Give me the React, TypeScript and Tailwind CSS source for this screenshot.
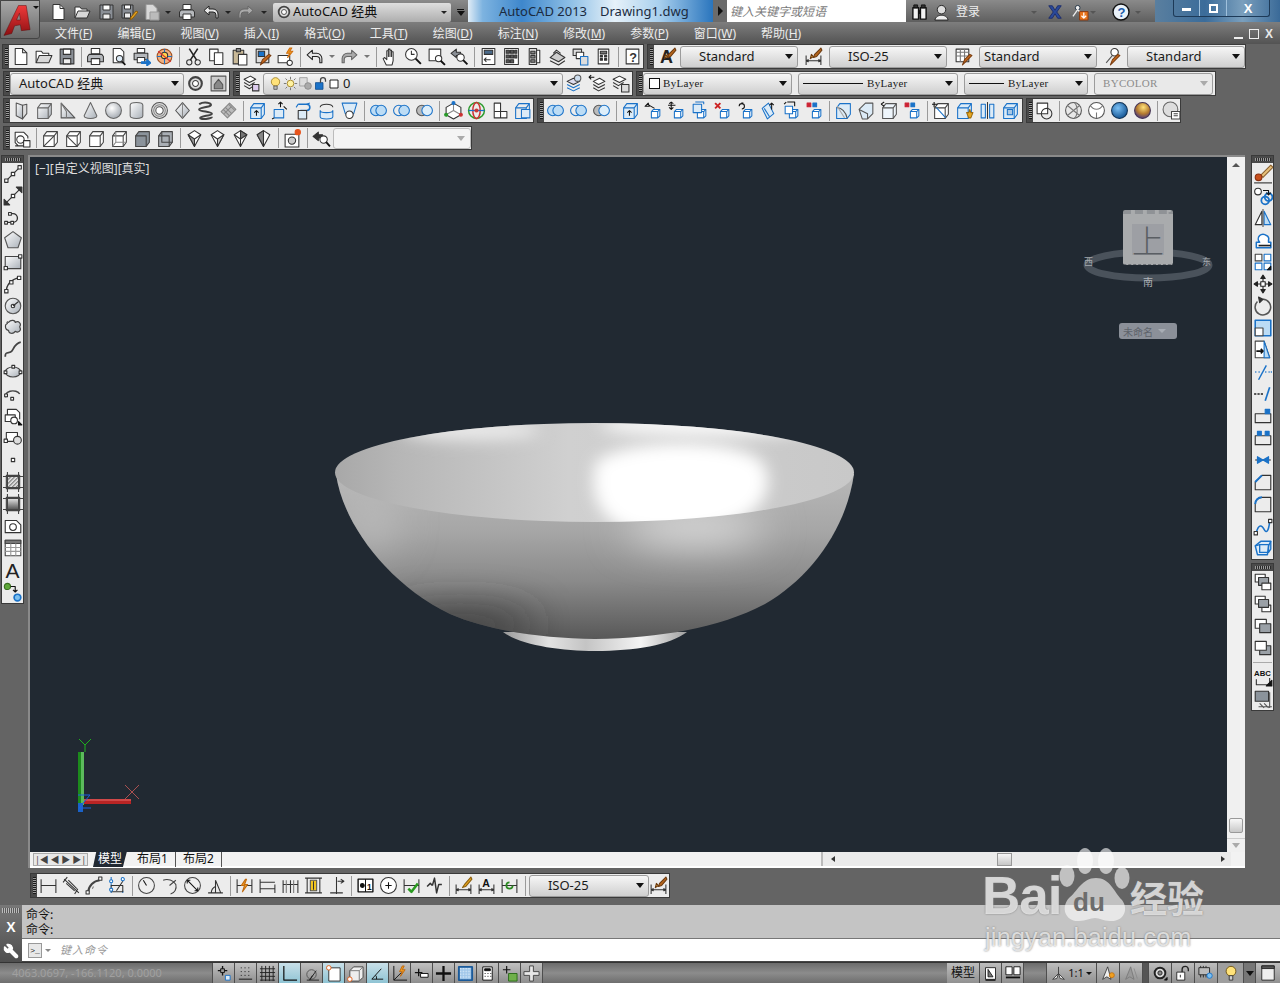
import React from "react";
import { Wrench } from "lucide-react";

type T = [string, string?, string?, number?];
const c = (x: number, y: number, r: number) => `M${x - r} ${y}a${r} ${r} 0 1 0 ${2 * r} 0a${r} ${r} 0 1 0 ${-2 * r} 0z`;
const r = (x: number, y: number, w: number, h: number) => `M${x} ${y}h${w}v${h}h${-w}z`;
const D = "#333";
const B = "#1a72c8";
const W = "#fff";
const M = "url(#metal)";
const N = "none";

const mb: T[] = [["M7 10l2-2h6v6l-2 2H7z", W, B], ["M7 10h6v6M13 10l2-2", N, B]];
const bb: T[] = [["M2.5 6.5l3-4h10v10l-3 4h-10z", "#dcebf7", B], ["M2.5 6.5h10v10M12.5 6.5l3-4", N, B]];
const gb: T[] = [["M2.5 6.5l3-4h10v10l-3 4h-10z", W, "#444"], ["M2.5 6.5h10v10M12.5 6.5l3-4", N, "#444"]];
const rings = (a: string, b: string): T[] => [[c(6.5, 9, 5), a, B], [c(11.5, 9, 5), b, B]];
const dim: T[] = [["M2 3v13M16 3v13M2 9h14", N, D]];
const dimB: T[] = [["M2 8v9M16 8v9M2 13h14M2 13l2-1v2zM16 13l-2-1v2z", N, D]];
const brush: T[] = [["M16 1l-6 6-1 3 3-1 5-6z", "#b5651d", "#6b3a10"], ["M9 9l-3 2 1-4z", "#d9a441", "#6b3a10"]];

const I: Record<string, T[]> = {
  new: [["M4 1.5h7l4 4v11H4z", W], ["M11 1.5v4h4"]],
  open: [["M2 15V4h5l1.5 2H14v2", W], ["M2 15l3-7h12l-3 7z", "#d8d8d8"]],
  save: [[r(3, 2, 13, 14), "#8a8f96"], [r(6, 2, 7, 5), W], [r(6, 11, 7, 5), "#eee"]],
  saveas: [[r(2, 2, 11, 13), "#8a8f96"], [r(4.5, 2, 6, 4), W], [r(4.5, 10, 6, 5), "#eee"], ["M16 8l-5 6-1 3 3-2 5-6z", "#e3a11c", "#8a5b10"]],
  plotd: [["M4 1.5h7l4 4v11H4z", "#d8d8d8", "#999"], ["M8 9h9v8H8z", "#bbb", "#999"]],
  print: [[r(5, 1.5, 8, 5), W], ["M3 7h12l1.5 2v5H1.5V9z", "#b5b8bc"], [r(5, 11, 8, 5.5), W]],
  preview: [["M4 1.5h7l3 3V15H4z", W], [c(10, 11, 3), "#dbe9f5"], ["M12 13.5l3.5 3.5", N, "#111", 1.6]],
  publish: [[r(5, 1.5, 7, 4), W], ["M2 6h13v6H2z", "#b5b8bc"], [r(5, 10, 7, 5), W], ["M9 14h5v-2.5l4 3.5-4 3v-2.5H9z", B, B]],
  p3d: [[c(9, 9, 7), "#f0b080", "#a05020"], ["M9 2v14M2 9h14", N, B], [c(9, 8, 3), "#ffd24d", D], ["M3 4l12 10", N, "#d33"]],
  cut: [[c(5, 14.5, 2.5)], [c(13, 14.5, 2.5)], ["M6 12.5L13 1.5M12 12.5L5 1.5", N, "#222", 1.5]],
  copy: [[r(2.5, 2, 8, 11), W], [r(7, 5.5, 8, 11), W]],
  paste: [[r(3, 3, 10, 13), "#c9b997"], [r(6, 1.5, 4, 3), "#888"], [r(8, 7, 8, 10), W]],
  match: [[r(3, 2, 12, 13), "#ddd"], [r(5, 4, 6, 5), B], ["M17 8l-6 6-4 3 2-5 6-5z", "#c8691c", "#7a3d10"]],
  block: [[r(2, 8, 11, 7), W], ["M13 1l-3 5h3l-2 4 5-6h-3l2-3z", "#f0981f", "#d07010"], [c(13, 15, 2.5), W]],
  undo: [["M7 3L2 7.5 7 12V9h4a3 3 0 0 1 3 3v3h2v-4a5 5 0 0 0-5-5H7z", W]],
  redo: [["M11 3l5 4.5L11 12V9H7a3 3 0 0 0-3 3v3H2v-4a5 5 0 0 1 5-5h4z", "#f4f4f4", "#a8a8a8"]],
  undow: [["M7 3L2 7.5 7 12V9h4a3 3 0 0 1 3 3v3h2v-4a5 5 0 0 0-5-5H7z", "#e8e8e8", "#222"]],
  redow: [["M11 3l5 4.5L11 12V9H7a3 3 0 0 0-3 3v3H2v-4a5 5 0 0 1 5-5h4z", "#aaa", "#666"]],
  pan: [["M5 17l-3-6 1.5-1 2 2V3.5h1.5V9V2h1.5v7V3h1.5v6V4.5h1.5V13l-1 4z", W]],
  zrt: [[c(7, 7, 5.5), W], ["M7 3.5V7h3"], ["M11 11l5 5", N, "#111", 1.8]],
  zw: [[r(2, 2, 11, 11), W], [c(11, 11, 3), W], ["M13 13l4 4", N, "#111", 1.8]],
  zp: [["M1 6l5-4v3h4v3H6v2z", "#8a8f96"], [c(10, 10, 3.5), W], ["M12.5 12.5l4 4", N, "#111", 1.8]],
  props: [[r(3, 1.5, 12, 15), W], [r(5, 3, 8, 4), "#4a6a8a"], ["M11 12H5M7 10l-2 2 2 2"]],
  dc: [[r(2.5, 1.5, 13, 15), W], [r(4, 3, 3, 3), "#555"], [r(8, 3, 3, 3), "#555"], [r(12, 3, 2, 3), "#555"], [r(4, 7.5, 3, 3), "#555"], [r(8, 7.5, 3, 3), "#555"], [r(12, 7.5, 2, 3), "#555"], [r(4, 12, 3, 3), "#555"], [r(8, 12, 3, 3), "#555"]],
  tp: [[r(4, 1.5, 7, 15), "#ddd"], [r(11, 3, 3, 12), W], [r(5.5, 4, 4, 2.5), "#888"], [r(5.5, 8, 4, 2.5), "#888"], [r(5.5, 12, 4, 2.5), "#888"]],
  sheet: [["M2 10l6-5 8 5-6 4z", "#ccc"], ["M2 13l8 4 6-4"], ["M5 6l3-3 4 3", N, "#333"]],
  markup: [[r(2, 2, 8, 6), "#ddd"], [r(5, 5, 7, 6), W], [r(9, 9, 7, 8), "#ddd", B]],
  calc: [[r(4, 2, 10, 14), W], [r(6, 4, 6, 2.5), "#777"], [r(6, 8, 2, 1.5), D], [r(10, 8, 2, 1.5), D], [r(6, 11, 2, 1.5), D], [r(10, 11, 2, 1.5), D]],
  help: [[r(3, 2, 12, 14), W], ["@6,14,12,?", D, N]],
  styleA: [["@2,15,17,A", "#222", N], ...brush],
  dimst: [...dimB, ...brush],
  tablest: [[r(2, 2, 12, 12), W], ["M2 5h12M2 8.5h12M6 2v12M10 2v12", N, "#777"], ["M17 8l-6 6-3 3 2-5 5-5z", "#c8691c", "#7a3d10"]],
  mlst: [[c(11, 5, 3.5), W], ["M9 8L3 15", N, "#555"], ["M16 8l-6 6-3 3 2-5 5-5z", "#c8691c", "#7a3d10"]],
  gear: [[c(9, 9, 6), "#ddd", "#444", 2], [c(9, 9, 2.8), W, "#444"]],
  wsp: [[r(2, 2, 14, 14), "#ccc", "#555"], ["M5 10l4-5 4 5v4H5z", "#888", "#555"]],
  layer: [["M2 5l6-3 5 3-6 3z", W], ["M2 8l5 3 5-3M2 11l5 3 3-2"], [r(10, 10, 6, 6), "#dce"]],
  bulb: [[c(9, 7, 5), "#ffe27a", "#a08020"], [r(7, 12, 4, 4), "#bbb", "#555"]],
  sun: [[c(9, 9, 4), "#fff2a0", "#a08020"], ["M9 1v3M9 14v3M1 9h3M14 9h3M3 3l2 2M13 13l2 2M15 3l-2 2M5 13l-2 2", N, "#666"]],
  freeze: [[r(2, 2, 9, 10), "#ddd", "#999"], [c(12, 12, 4), "#aaa", "#888"]],
  lock: [[r(3, 8, 9, 8), B, "#124f90"], ["M9 8V5a3 3 0 0 1 6 0v2", N, "#444", 1.5]],
  sq: [[r(3, 3, 12, 12), W, "#111", 1.4]],
  lmatch: [["M2 7l6-3 6 3-6 3z", "#dde"], ["M2 10l6 3 6-3M2 13l6 3 6-3", N, B], [c(12, 4, 3), "#cde", "#555"]],
  lprev: [["M5 7l6-3 5 3-6 3z", W], ["M5 10l5 3 6-3M5 13l5 3 6-3"], ["M1 3h5M3 1l-2 2 2 2", N, "#111"]],
  lstate: [["M2 5l6-3 6 3-6 3z", W], ["M2 8l5 3 5-3M2 11l5 3"], [r(10, 10, 7, 7), "#ddd"]],
  polysolid: [["M4 2l6 2v13l-6-3z", M, "#555"], ["M10 4l4-1v9l-4 5z", "#ddd", "#555"]],
  box: [["M2.5 6.5l3-4h10v10l-3 4h-10z", M, "#666"], ["M2.5 6.5h10v10M12.5 6.5l3-4", N, "#666"]],
  wedge: [["M3 2v14h13z", M, "#555"], ["M3 2l5 8v6", N, "#777"]],
  cone: [["M9 1.5L3 14a6 2.5 0 0 0 12 0z", M, "#666"]],
  sphere: [[c(9, 9, 7.5), "url(#ball)", "#666"]],
  cyl: [["M3 4a6 2.5 0 0 1 12 0v10a6 2.5 0 0 1-12 0z", M, "#666"]],
  torus: [[c(9, 9, 7.5), "#ddd", "#555"], [c(9, 9, 3.5), W, "#555"], [c(9, 9, 5.5), N, "#888"]],
  pyramid: [["M9 1.5L2.5 9 9 16.5l6.5-7.5z", M, "#555"], ["M9 1.5V16.5", N, "#888"]],
  helix: [["M3 3c5-3 12-1 11 1s-11 2-11 4 12 2 12 4-11 2-11 4 11 1 11-1", N, "#444", 2]],
  planar: [["M2 10l8-8 6 6-8 8z", "#bbb", "#888"], ["M6 6l6 6M9 3l6 6M4 8l6 6M12 5l-7 7", N, "#888"]],
  extrude: [...bb, ["M8 14V9M6 11l2-2 2 2", N, "#111"]],
  presspull: [[r(3, 8, 9, 8), "#dcebf7", B], ["M9 6V1M7 3l2-2 2 2M12 5l3 3M3 16l-2 1", N, "#111"]],
  sweep: [["M4 3h8a3 3 0 0 1 0 6H6", N, B, 1.5], [r(4, 9, 8, 8), "#dcebf7", D], ["M4 3l-2 3M12 3l3-1", N, B]],
  revolve: [["M3 6a6 3 0 0 1 12 0", N, D], ["M3 9a6 2 0 0 0 12 0v6a6 2 0 0 1-12 0z", "#dcebf7", B]],
  loft: [["M2 2h14l-3 10H5z", "#dcebf7", B], [c(9, 13, 3.5), W, D]],
  u1: rings("#bcdcf5", "#bcdcf5"),
  u2: rings("none", "#bcdcf5"),
  u3: [[c(6.5, 9, 5), "#bbb", "#555"], [c(11.5, 9, 5), "#ddeefa", B]],
  g3d: [["M9 2l7 4v7l-7 4-7-4V6z", W, D], ["M9 9V2M9 9l-7 4M9 9l7 4", N, "#888"], [c(9, 2, 1.4), B, B], [c(2, 13, 1.4), "#2a9a2a", "#2a9a2a"], [c(16, 13, 1.4), "#c33", "#c33"]],
  g3r: [[c(9, 9, 7.5), N, "#2a9a2a", 1.4], ["M9 1.5a3.5 7.5 0 0 1 0 15a3.5 7.5 0 0 1 0-15", N, "#c33", 1.4], ["M1.5 9h15", N, B, 1.2], [c(9, 9, 1.5), "#c33", "#c33"]],
  gscale: [["M4 2h6v8h6v6H4z", W, D], ["M4 10h6v6", N, D]],
  gmove: [...bb.map((t) => [t[0], N, B] as T), [r(8, 8, 8, 8), "#dcebf7", B]],
  c1: [...mb, ["M3 3l7 4M1 5l3-3 1 3z", N, "#111"]],
  c2: [...mb, ["M4 1v7M1 4h7M2 2.5L4 1l2 1.5M2 6l2 2 2-2", N, "#111"]],
  c3: [...mb, [r(3, 3, 8, 8), "#dcebf7", B], ["M5 1h8v2", N, B]],
  c4: [...mb, ["M2 2l5 5M7 2L2 7", N, "#c22", 1.8]],
  c5: [...mb, ["M3 5a2.5 2.5 0 1 1 2.5 2.5M5 2l2 0", N, "#111"]],
  c6: [["M3 7l6-5 5 10-6 5z", "#dcebf7", B], ["M12 2v6M10 4l2-2 2 2", N, "#111"], ["M5 7l5 8", N, B]],
  c7: [...mb, [r(3, 5, 7, 7), W, B], ["M5 1h7v4M2 3l2-2", N, "#111"]],
  c8: [...mb, [r(2, 2, 3.5, 3.5), "#c23", "#c23"], [r(7.5, 2, 3.5, 3.5), B, B]],
  d1: [["M2.5 6.5l3-4h10v10l-3 4h-10z", "#dcebf7", B], ["M2.5 6.5c4-1 9 4 10 10", N, "#555"], ["M3 5l7 11", N, "#aaa"]],
  d2: [["M2 8L8 2h7v10l-5 5H5z", "#dcebf7", "#555"], ["M2 8l8 4v5", N, "#555"]],
  d3: [...bb.map((t) => [t[0], t[1] === "#dcebf7" ? "#eef5fb" : N, "#555"] as T), ["M1 3l3-2M1 3l3 2", N, "#111"]],
  e1: [...gb, ["M2 1v5M0 3h5", N, "#111"], ["M4 6l9 10", N, B]],
  e2: [...bb, ["M13 16l-2-5 2 0 1-3 1 3 2 0-2 5z", "#e9a820", "#9a6a10"]],
  e3: [[r(3, 3, 4, 13), "#dcebf7", B], [r(11, 3, 4, 13), "#dcebf7", B], ["M9 1v16", N, "#333", 1]],
  e4: [...bb, [r(6, 8, 5, 5), "#aac8e4", B]],
  e5: [...bb.map((t) => [t[0], t[1] === "#dcebf7" ? W : N, B] as T), ["M5 14l3 3 6-8", N, "#2a9a20", 2.2]],
  f1: [[r(2, 2, 10, 10), W, D], [c(11, 12, 5), "none", D]],
  w1: [[c(9, 9, 7.5), "#e8e8e8", "#555"], ["M3 4l12 10M15 4L3 14M9 1.5a3.5 7.5 0 0 1 0 15", N, "#777"]],
  w2: [[c(9, 9, 7.5), W, "#555"], ["M3 4c3 5 9 5 12 0M9 11v5", N, "#777"]],
  w3: [[c(9, 9, 7.5), "url(#blue)", "#135"]],
  w4: [[c(9, 9, 7.5), "url(#gold)", "#435"]],
  w5: [[c(8, 8, 7), "#ddd", "#666"], [r(9, 10, 8, 7), W, "#444"], ["M11 12h4M11 14h4", N, "#444"]],
  q1: [["M3 16h10M6 16l-3-3V3h8l4 4v2", W], [c(8, 10, 3.5), W], [r(11, 11, 6, 6), W]],
  v1: [...gb, ["M12.5 6.5L2.5 16.5", N, "#444"]],
  v2: [...gb, ["M2.5 6.5l10 10", N, "#444"]],
  v3: gb,
  v4: [...gb, ["M5.5 2.5v10h10M5.5 12.5l-3 4", N, "#888"]],
  v5: [["M5.5 2.5h10v10l-3 4h-10v-10z", "#8b939b", "#444"], ["M2.5 6.5h10v10", N, "#444"]],
  v6: [["M5.5 2.5h10v10l-3 4h-10v-10z", "#a9aeb4", "#444"], ["M2.5 6.5h10v10M5.5 2.5v10h10", N, "#444"]],
  vs1: [["M9 1.5l6 4-6 11-6-11z", W, "#333"], ["M3 5.5l6 4v7z", "#999", "#333"], ["M15 5.5l-6 4", N, "#333"]],
  vs2: [["M9 1.5l6 4-6 11-6-11z", W, "#333"], ["M15 5.5l-6 4v7z", "#ccc", "#333"], ["M3 5.5l6 4", N, "#333"]],
  vs3: [["M9 1.5l6 4-6 11-6-11z", W, "#333"], ["M9 1.5l6 4-6 4z", "#777", "#333"], ["M3 5.5l6 4v7", N, "#333"]],
  vs4: [["M9 1.5l6 4-6 11-6-11z", W, "#333"], ["M3 5.5l6-4v15z", "#888", "#333"]],
  cam: [[r(2, 5, 13, 12), W], [c(8.5, 11, 3.5), "#ccc"], [c(14, 3, 2.5), "#e8541c", "#e8541c"]],
  zoomarrow: [["M1 7l5-4v2.5h4v3H6V11z", "#333"], [c(11, 10, 3.5), W], ["M13.5 12.5l3.5 4", N, "#111", 1.8]],
  l1: [["M3 15L15 3", N, "#333"], [r(1.5, 13.5, 3, 3), W], [r(13.5, 1.5, 3, 3), W], [r(7.5, 7.5, 3, 3), W]],
  l2: [["M3 15L15 3", N, "#333"], ["M1 17v-5l5 5zM17 1v5l-5-5z", "#333", "#333"], [r(7.5, 7.5, 3, 3), W]],
  l3: [["M3 13h6a4 4 0 1 0 0-8h-2", N, "#333", 1.2], [r(1.5, 12, 2.5, 2.5), W], [r(7, 12, 2.5, 2.5), W], [r(5, 4, 2.5, 2.5), W]],
  l4: [["M9 1.5L16.5 7l-3 9h-9l-3-9z", M, "#555"]],
  l5: [[r(2, 4, 14, 11), M, "#444"], [r(1, 13, 3, 3), W], [r(14, 2.5, 3, 3), W]],
  l6: [["M3 16c0-7 4-11 12-13", N, "#333", 1.2], [r(1.5, 14, 3, 3), W], [r(6, 6, 3, 3), W], [r(13, 2, 3, 3), W]],
  l7: [[c(9, 9, 7), M, "#555"], [c(9, 9, 1.6), W], ["M9 9l5-4", N, "#333"]],
  l8: [["M5 4c2-3 6-2 6 0 3-2 6 1 4 4 2 3-1 6-4 4-2 3-6 2-6-1-3 0-4-5-1-6-1-1 0-2 1-1z", M, "#444"]],
  l9: [["M2 15c0-6 4-2 6-5s3-7 8-8", N, "#444", 1.6]],
  l10: [["M2 9a7 4.5 0 1 0 14 0a7 4.5 0 1 0-14 0", M, "#444"], [r(1, 8, 2.5, 2.5), W], [r(14.5, 8, 2.5, 2.5), W], [r(8, 3, 2.5, 2.5), W]],
  l11: [["M3 12a6.5 4 0 1 1 12-3", N, "#444", 1.3], [r(1.5, 9, 2.5, 2.5), W], [r(7, 12, 2.5, 2.5), W]],
  l12: [["M4 8V3h8l3 3v6", W], [r(2, 8, 9, 6), W], [c(10, 13, 3), W], ["M14 14l3 3h-3z", "#111", "#111"]],
  l13: [[r(3, 4, 10, 8), W], [r(1, 10, 3, 3), W], [c(13, 11, 3.5), "#ddd"]],
  l14: [[r(7.5, 7.5, 3, 3), "#fff", "#333"]],
  l15: [[r(3, 3, 12, 12), "url(#hatch)", "#444"], ["M0 4h18M0 14h18M4 0v18M14 0v18", N, "#444"]],
  l16: [[r(3, 3, 12, 12), "url(#grad)", "#444"], ["M0 4h18M0 14h18M4 0v18M14 0v18", N, "#444"]],
  l17: [["M2 4h10l4 4v7H2z", W, "#333"], [c(9, 10, 3), W, "#333"]],
  l18: [[r(2, 2, 14, 14), W, "#444"], [r(2, 2, 14, 3), "#777", "#444"], ["M2 8.5h14M2 12h14M7 5v11M11.5 5v11", N, "#999"]],
  l20: [[c(4, 4, 2.8), "#5fa83a", "#3a7020"], ["M7 4h4v4M9 7l2 2 2-2", N, "#111"], [c(13, 14, 3), "#7cc0f0", B, 1.5]],
  r1: [["M16 1l-9 9 2 2 9-9z", "#e8c07a", "#8a6030"], [c(5, 12, 3), "#c8501c", "#8a3010"], ["M1 17h16", N, "#333"]],
  r2: [[c(4.5, 5, 3), W, D], [c(11, 13, 3.5), "none", B, 1.6], [c(14, 10, 3.5), "none", B, 1.6], ["M9 4h5v3M12 6l2 2 2-2", N, "#111"]],
  r3: [["M8 3v12H2z", W, D], ["M10 3v12h6z", "#bcdcf5", B], ["M9 1v16", N, "#555"]],
  r4: [["M3 16v-5h3a4 4 0 0 1 6-6 3 3 0 0 1 2 4v2h2v5z", W, B, 1.4], ["M5 14h11", N, "#222", 1.5]],
  r5: [[r(2, 2, 6, 6), W, "#444"], [r(10, 2, 6, 6), W, B], [r(2, 10, 6, 6), W, B], [r(10, 10, 6, 6), W, B], ["M13 16l3-3v3z", "#111", "#111"]],
  r6: [["M9 1l2 3H7zM9 17l2-3H7zM1 9l3-2v4zM17 9l-3-2v4z", "#222", "#222"], ["M4 9h10M9 4v10", N, "#222"], [r(7, 7, 4, 4), W, "#222"]],
  r7: [["M9 3a7 7 0 1 1-5 2", N, "#555", 1.4], ["M5 1l4 2-3 3z", "#333", "#333"]],
  r8: [[r(2, 2, 14, 14), "#bcdcf5", B, 1.4], [r(2, 9, 7, 7), W, "#444"]],
  r9: [["M2 1h8l5 15H2z", W, "#444"], ["M10 1l5 15H10z", "#bcdcf5", B], ["M3 10h6M7 8l2 2-2 2", N, "#111", 1.4]],
  r10: [["M2 9h1M5 9h1M11 9h1M14 9h1M16 9h1", N, B, 1.4], ["M12 3L5 16", N, B, 1.3]],
  r11: [["M1 9h2M4 9h2M7 9h2", N, "#222", 1.3], ["M11 15l4-12", N, B, 1.5]],
  r12: [["M2 7h14v8H2z", "#ececec", "#333"], [r(11, 3, 4, 4), B, B]],
  r13: [["M2 7h14v8H2z", "#ececec", "#333"], [r(4, 3, 3.5, 3.5), B, B], [r(11, 3, 3.5, 3.5), B, B]],
  r14: [["M2 9h14", N, "#333"], ["M4 6l5 3-5 3zM14 6L9 9l5 3z", B, B]],
  r15: [["M2 9l6-6h8v13H2z", "#ececec", "#333"], ["M2 9l6-6", N, B, 1.8]],
  r16: [["M2 16V9a6 6 0 0 1 6-6h8v13z", "#ececec", "#333"], ["M2 9a6 6 0 0 1 6-6", N, B, 1.8]],
  r17: [["M3 15c2-8 5-7 7-3s4 2 5-7", N, B, 1.4], [r(1, 14, 3, 3), W], [r(14, 3, 3, 3), W]],
  r18: [["M2 7l5-4h9l-2 4-1 8H4z", "#dcebf7", B, 1.3], ["M6 6h8v7H6zM2 7l4-1M14 13l2-3V3", N, B, 1.2]],
  o1: [[r(2, 2, 9, 7), W, "#333"], [r(5, 5, 9, 7), "#9aa0a6", "#333"], [r(8, 10, 8, 6), W, "#333"]],
  o2: [[r(2, 2, 9, 7), W, "#333"], [r(8, 10, 8, 6), W, "#333"], [r(5, 5, 9, 7), "#9aa0a6", "#333"]],
  o3: [[r(2, 3, 10, 8), W, "#333"], [r(6, 7, 10, 8), "#9aa0a6", "#333"]],
  o4: [[r(6, 7, 10, 8), "#9aa0a6", "#333"], [r(2, 3, 10, 8), W, "#333"]],
  abc: [["@1,8,7,ABC", "#111", N], ["M3 11v5h12v-6", N, "#333"], ["M12 17l5-5v5z", "#111", "#111"]],
  o6: [[r(2, 2, 12, 9), "#8b939b", "#333"], ["M5 16h12M15 3v14M6 13l4 4M10 13l4 4", N, "#555"]],
  h1: dim,
  h2: [["M2 3l14 13M5 1L1 6M15 12l-3 5M4 7l8 7", N, D], ["M6 4l8 8", N, D]],
  h3: [["M3 15a12 12 0 0 1 11-11", N, "#444", 2], [r(1, 14, 3, 3), W], [r(13, 1, 3, 3), W], ["M8 10l-1 2", N, "#777"]],
  h4: [["M3 1v3M3 7v3M3 13v3M14 2v3M14 14v2", N, B], ["M3 9h11v6H3zM14 5L8 14", N, D], [c(3, 5, 1.5), W, B], [c(14, 3, 1.5), W, B], [c(3, 13, 1.5), W, B]],
  h5: [[c(9, 9, 7.5), "#eee", "#444"], ["M9 9L6 4", N, "#111"]],
  h6: [["M3 4a10 10 0 0 1 12 4M15 8c1 4-1 8-5 9M9 9l6-5", N, "#444"]],
  h7: [[c(9, 9, 7.5), "#eee", "#444"], ["M4 4l10 10M4 4v3M4 4h3M14 14v-3M14 14h-3", N, "#111"]],
  h8: [["M2 16h14M9 16L9 4M9 4l5 12M5 16c0-4 2-5 4-6", N, "#333"]],
  h9: [...dim, ["M10 3L6 9h3l-2 6 5-7H9l2-5z", "#f09a1f", "#c06a10"]],
  h10: [["M2 3v13M16 8v8M2 6h14M2 12h14", N, D]],
  h11: [["M2 4v12M9 4v12M16 4v12M2 8h7M9 8h7", N, D], ["M5 4v12M12 4v12", N, "#777"]],
  h12: [["M1 2h16M1 16h16M3 2v14M15 2v14", N, D], [r(6, 4, 6, 10), "#f0c420", "#555"], ["M9 5v8", N, "#333"]],
  h13: [["M9 1v16M3 16h12M10 5h6M13 3l3 2-3 2", N, D]],
  h14: [[r(2, 3, 14, 12), W, "#111", 1.3], ["M9 3v12", N, "#111"], [c(6, 9, 1.8), "#111", "#111"], ["@10.5,13,8,1", "#111", N]],
  h15: [[c(9, 9, 7.5), W, "#333"], ["M6 9h6M9 6v6", N, "#111"]],
  h16: [...dim, ["M6 12l3 3 6-8", N, "#2a9a20", 2.4]],
  h17: [["M2 10l3-3 2 2M7 9l2-7 2 14 2-8h3", N, D, 1.4]],
  h18: [...dimB, ["M16 1l-6 7-2 3 3-1 6-7z", "#e8a41c", "#8a6010"]],
  h19: [...dimB, ["@5,10,10,A", "#111", N]],
  h20: [...dim, ["M9 6a3 3 0 1 0 3 3", N, "#2a8a20", 1.6]],
  s1: [["M8 1v10M3 6h10", N, "#111", 1.4], [r(6, 4, 4, 4), "#999", "#111"], [r(11, 11, 5, 5), "#dcebf7", B]],
  s2: [["M4 3h1M8 3h1M12 3h1M4 7h1M8 7h1M12 7h1M4 11h1M8 11h1M12 11h1M2 15h14", N, "#111"]],
  s3: [["M1 4h16M1 8h16M1 12h16M1 16h16M3 1v16M7 1v16M11 1v16M15 1v16", N, "#222"]],
  s4: [["M3 1v15h14", N, "#111", 1.3]],
  s5: [[c(9, 10, 5), "none", "#555"], ["M4 16h13M7 16l7-10M10 11l-3 5", N, "#222"]],
  s6: [[r(4, 3, 12, 14), W, "#333"], [c(4, 3, 2.4), W, "#e0601c"]],
  s7: [["M3 6l4-4h10v11l-4 4H3z", "#eee", "#444"], ["M3 6h10v11M13 6l4-4", N, "#777"], [c(3, 15, 2.4), W, "#e0601c"]],
  s8: [["M3 15L13 4M3 15h12", N, "#111"], ["M7 11c1 1 1 2 1 4", N, "#111"]],
  s9: [["M3 1v15h14M3 16l8-8", N, "#111"], ["M12 1L9 7h3l-2 5 5-7h-3l2-4z", "#f09a1f", "#c06a10"]],
  s10: [["M2 8h8M6 4v8", N, "#111", 1.4], [r(8, 9, 8, 4), W, "#111"]],
  s11: [["M1 9h16M9 1v16", N, "#111", 2.4]],
  s12: [[r(2, 2, 14, 14), "url(#dots)", "#1a5a9a", 2]],
  s13: [[r(4, 2, 10, 14), W, "#111"], [r(6, 4, 6, 2), "#111", "#111"], ["M6 9h1M9 9h1M12 9h1M6 12h1M9 12h1M12 12h1", N, "#111"]],
  s14: [["M6 1v8M2 5h8", N, "#111", 1.2], [r(8, 9, 9, 8), "#6fb04a", "#2a6a1a"]],
  s15: [["M7 1h4v6h6v4h-6v6H7v-6H1V7h6z", "#e8e8e8", "#444"]],
  t1: [[r(3, 2, 12, 14), W, "#111"], ["M3 17h12", N, "#111", 1.5], ["M6 4v9h6z", "#777", "#111"]],
  t2: [[r(1, 2, 7, 9), W, "#111"], [r(10, 2, 7, 9), W, "#111"], ["M1 14h16", N, "#111", 2]],
  t3: [["M9 1v8M9 9l-7 7 5-1zM9 9l7 7-5-1z", "#eee", "#333"]],
  t4: [["M8 1L2 16l5-3 5 3z", "#eee", "#333"], [c(13, 11, 3), "#f0a020", "#c07010"]],
  t5: [["M8 1L2 16l5-3 5 3z", "#999", "#777"], ["M12 3l4 12", N, "#888"]],
  t6: [[c(9, 9, 6), "#ddd", "#222", 2.2], [c(9, 9, 2.4), "#888", "#222"], ["M14 17l3-3v3z", "#111", "#111"]],
  t7: [[r(2, 8, 9, 9), W, "#222"], ["M6 11v3", N, "#222"], ["M8 8V5a3 3 0 0 1 7 0v2", N, "#222", 1.5]],
  t8: [[r(1, 3, 12, 8), "#bbb", "#222"], ["M3 11v3M6 11v3M9 11v3M3 1v2M6 1v2M9 1v2", N, "#222"], [c(13, 12, 3), "#7cc0f0", B]],
  t9: [[c(9, 7, 5.5), "#ffe27a", "#6a5010"], [r(7, 12, 4, 5), "#ccc", "#333"]],
  t10: [[r(2, 1, 14, 16), "#eee", "#222"], [r(2, 1, 14, 3), "#555", "#222"]],
  bino: [[r(2, 4, 6, 12), "#f2f2f2", "#111", 1.5], [r(10, 4, 6, 12), "#f2f2f2", "#111", 1.5], [r(3, 1, 4, 3), "#333", "#111"], [r(11, 1, 4, 3), "#333", "#111"], [r(8, 7, 2, 3), "#111", "#111"]],
  user: [[c(9, 6, 4.5), "#ddd", "#222"], ["M2 17c1-4 4-5 7-5s6 1 7 5z", "#eee", "#222"]],
  xc: [["M2 2h4l3 5 3-5h4l-5 7 5 7h-4l-3-5-3 5H2l5-7z", "#2a4a9a", "#1a2a6a"]],
  exch: [[c(6, 4, 2.5), "#eee", "#234"], ["M1 13l5-7 3 3", N, "#eee", 1.4], [r(8, 8, 9, 9), "#e8741c", "#8a3a10"], ["M12.5 9v6M10 12.5l2.5 2.5 2.5-2.5", N, W, 1.3]],
  hlp: [[c(9, 9, 8), "#eaf2fa", "#111", 1.4], ["@5.5,14,13,?", "#1a5aaa", N]],
};

function Ic({ n, s = 19 }: { n: string; s?: number }) {
  const list = I[n] ?? [];
  return (
    <svg width={s} height={s} viewBox="0 0 18 18" className="shrink-0">
      {list.map((t, i) => {
        if (t[0].startsWith("@")) {
          const [x, y, sz, ...rest] = t[0].slice(1).split(",");
          return (
            <text key={i} x={x} y={y} fontSize={sz} fontWeight="bold" fontFamily="Liberation Sans, sans-serif" fill={t[1]}>
              {rest.join(",")}
            </text>
          );
        }
        return <path key={i} d={t[0]} fill={t[1] ?? "none"} stroke={t[2] ?? D} strokeWidth={t[3] ?? 1} strokeLinejoin="round" />;
      })}
    </svg>
  );
}

const Arrow = ({ dark = true }: { dark?: boolean }) => (
  <span className={`w-0 h-0 border-l-[4px] border-r-[4px] border-t-[5px] border-l-transparent border-r-transparent ${dark ? "border-t-[#111]" : "border-t-[#aaa]"}`} />
);
const Tiny = ({ c: col = "border-t-[#555]" }: { c?: string }) => (
  <span className={`w-0 h-0 border-l-[3px] border-r-[3px] border-t-[3px] border-l-transparent border-r-transparent ${col}`} />
);

const Grip = () => (
  <div className="w-[6px] self-stretch flex items-center justify-center bg-[#4a4a4a] shrink-0">
    <div className="w-[3px] h-[17px] bg-[repeating-linear-gradient(0deg,#1a1a1a_0_1px,#9a9a9a_1px_2px)]" />
  </div>
);
const Sep = () => <div className="w-px h-[20px] bg-[#9a9a9a] ml-[3px] mr-[2px] shrink-0" />;

function Icons({ list }: { list: string }) {
  return (
    <>
      {list.split(" ").map((n, i) =>
        n === "|" ? (
          <Sep key={i} />
        ) : n === "v" ? (
          <span key={i} className="w-[12px] flex justify-center shrink-0"><Tiny c="border-t-[#777]" /></span>
        ) : (
          <span key={i} className="w-[23px] flex justify-center shrink-0"><Ic n={n} /></span>
        )
      )}
    </>
  );
}

const bar = "flex items-center bg-[#ececec] border border-[#3a3a3a] h-full";
const ui = { fontFamily: '"Noto Sans","Noto Sans CJK SC",sans-serif' };
const cjk = { fontFamily: '"Noto Sans CJK SC",sans-serif' };

function Combo({ w, text, pl = 18, serif, disabled, children }: { w: string; text?: string; pl?: number; serif?: boolean; disabled?: boolean; children?: React.ReactNode }) {
  return (
    <div
      className={`${w} h-[22px] shrink-0 flex items-center rounded-[3px] border border-[#9c9c9c] pr-[4px] ${disabled ? "bg-[#e9e9e9] text-[#8c8c8c]" : "bg-[linear-gradient(#f6f6f6,#cfcfcf)] text-[#1a1a1a]"}`}
      style={{ paddingLeft: pl }}
    >
      {children}
      {text && (
        <span className={serif ? "text-[11px] tracking-[0.3px] whitespace-nowrap" : "text-[13px] whitespace-nowrap"} style={serif ? { fontFamily: '"Liberation Serif",serif' } : ui}>
          {text}
        </span>
      )}
      <span className="ml-auto flex"><Arrow dark={!disabled} /></span>
    </div>
  );
}

const menus: [string, string][] = [["文件", "F"], ["编辑", "E"], ["视图", "V"], ["插入", "I"], ["格式", "O"], ["工具", "T"], ["绘图", "D"], ["标注", "N"], ["修改", "M"], ["参数", "P"], ["窗口", "W"], ["帮助", "H"]];

function TitleBar() {
  return (
    <div className="flex h-[22px] flex-1 min-w-0 bg-[linear-gradient(#8a8a8a,#5f5f5f)] shrink-0">
      <div className="w-[428px] flex items-center pl-[6px] pt-[2px] shrink-0">
        <span className="w-[24px] flex justify-center"><Ic n="new" s={18} /></span>
        <span className="w-[24px] flex justify-center"><Ic n="open" s={18} /></span>
        <span className="w-[24px] flex justify-center"><Ic n="save" s={18} /></span>
        <span className="w-[22px] flex justify-center"><Ic n="saveas" s={18} /></span>
        <span className="w-[22px] flex justify-center"><Ic n="plotd" s={18} /></span>
        <span className="w-[12px] flex justify-center"><Tiny c="border-t-[#222]" /></span>
        <span className="w-[26px] flex justify-center"><Ic n="print" s={18} /></span>
        <span className="w-[22px] flex justify-center"><Ic n="undow" s={18} /></span>
        <span className="w-[12px] flex justify-center"><Tiny c="border-t-[#222]" /></span>
        <span className="w-[24px] flex justify-center"><Ic n="redow" s={18} /></span>
        <span className="w-[12px] flex justify-center"><Tiny c="border-t-[#222]" /></span>
        <div className="w-[178px] h-[19px] ml-[3px] flex items-center bg-[linear-gradient(#dedede,#aeaeae)] rounded-[2px] pl-[3px] pr-[4px] shrink-0">
          <Ic n="gear" s={16} />
          <span className="text-[13px] text-[#111] ml-[1px] whitespace-nowrap" style={ui}>AutoCAD 经典</span>
          <span className="ml-auto flex"><Tiny c="border-t-[#222]" /></span>
        </div>
        <span className="ml-[4px] w-[11px] flex flex-col items-center gap-[1px]">
          <span className="w-[7px] h-px bg-[#111]" />
          <Arrow />
        </span>
      </div>
      <div className="w-[245px] shrink-0 flex items-center pl-[31px] pt-[2px] text-[13px] text-[#1b2b3f] bg-[linear-gradient(90deg,#e0ecf6_0,#7db3e0_6%,#3e87cc_22%,#8fc0e6_42%,#e6f1f9_60%,#a9d0ee_78%,#2a75bd_100%)]" style={ui}>
        <span className="w-[101px] whitespace-nowrap">AutoCAD 2013</span>
        <span className="whitespace-nowrap">Drawing1.dwg</span>
      </div>
      <div className="w-[14px] shrink-0 bg-[#6b6b6b] flex items-center justify-center">
        <span className="w-0 h-0 border-t-[5px] border-b-[5px] border-l-[5px] border-t-transparent border-b-transparent border-l-[#111]" />
      </div>
      <div className="w-[179px] shrink-0 bg-white flex items-center pl-[3px] pt-[2px] text-[12px] italic text-[#7a7a7a]" style={ui}>键入关键字或短语</div>
      <div className="w-[249px] shrink-0 flex items-center pt-[2px]">
        <span className="ml-[5px] w-[18px] flex"><Ic n="bino" s={17} /></span>
        <span className="ml-[4px] w-[20px] flex"><Ic n="user" s={17} /></span>
        <span className="ml-[3px] text-[12px] text-[#eee] w-[75px]" style={ui}>登录</span>
        <Tiny />
        <span className="ml-[10px] w-[18px] flex"><Ic n="xc" s={16} /></span>
        <span className="ml-[7px] w-[18px] flex"><Ic n="exch" s={17} /></span>
        <Tiny />
        <span className="ml-[16px] flex"><Ic n="hlp" s={18} /></span>
        <span className="ml-[5px] flex"><Tiny /></span>
      </div>
      <div className="flex-1 flex items-start justify-end pr-[10px] bg-[linear-gradient(90deg,#5a7f9f,#3b6c9a_40%,#7a9fbd_70%,#3a6a98)]">
        <div className="flex h-[17px] border border-t-0 border-[#1d3a58] rounded-b-[3px] overflow-hidden">
          <div className="w-[26px] flex items-center justify-center border-r border-[#9fc0dc]"><span className="w-[9px] h-[3px] bg-white mt-[2px]" /></div>
          <div className="w-[27px] flex items-center justify-center border-r border-[#9fc0dc]"><span className="w-[9px] h-[9px] border-2 border-white" /></div>
          <div className="w-[42px] flex items-center justify-center text-white text-[13px] font-bold leading-none" style={{ fontFamily: '"Liberation Sans",sans-serif' }}>X</div>
        </div>
      </div>
    </div>
  );
}

function MenuBar() {
  return (
    <div className="flex items-center h-[22px] pl-[15px] pt-[2px] gap-[25px] bg-[linear-gradient(#7e7e7e,#535353)] text-[12px] text-[#ececec]" style={ui}>
      {menus.map(([a, b]) => (
        <span key={b} className="whitespace-nowrap">
          {a}(<span className="underline">{b}</span>)
        </span>
      ))}
      <div className="ml-auto flex items-center gap-[6px] pr-[7px] text-[#e8e8e8]">
        <span className="w-[9px] h-[2px] bg-[#eee] mt-[8px]" />
        <span className="w-[10px] h-[10px] border border-[#eee]" />
        <span className="text-[12px] font-bold leading-none" style={{ fontFamily: '"Liberation Sans",sans-serif' }}>X</span>
      </div>
    </div>
  );
}

function Toolbars() {
  return (
    <>
      <div className="flex h-[25px] pl-[2px] gap-[3px]">
        <div className={`${bar} w-[642px]`}>
          <Grip />
          <Icons list="new open save | print preview publish p3d | cut copy paste match block | undow v redow v | pan zrt zw zp | props dc tp sheet markup calc | help" />
        </div>
        <div className={`${bar} w-[599px] bg-[#d6d6d6]`}>
          <Grip />
          <span className="w-[26px] flex justify-center"><Ic n="styleA" /></span>
          <Combo w="w-[118px]" text="Standard" />
          <span className="w-[31px] flex justify-center"><Ic n="dimst" /></span>
          <Combo w="w-[118px]" text="ISO-25" />
          <span className="w-[32px] flex justify-center"><Ic n="tablest" /></span>
          <Combo w="w-[118px]" text="Standard" pl={4} />
          <span className="w-[30px] flex justify-center"><Ic n="mlst" /></span>
          <Combo w="w-[118px]" text="Standard" />
        </div>
      </div>
      <div className="flex h-[25px] pl-[3px] gap-[3px] mt-[2px]">
        <div className={`${bar} w-[227px]`}>
          <Grip />
          <Combo w="w-[174px]" text="AutoCAD 经典" pl={8} />
          <span className="w-[23px] flex justify-center"><Ic n="gear" /></span>
          <span className="w-[22px] flex justify-center"><Ic n="wsp" /></span>
        </div>
        <div className={`${bar} w-[400px]`}>
          <Grip />
          <span className="w-[25px] flex justify-center"><Ic n="layer" /></span>
          <Combo w="w-[300px]" text="0" pl={4}>
            <span className="flex items-center mr-[3px]"><Ic n="bulb" s={15} /><Ic n="sun" s={15} /><Ic n="freeze" s={15} /><Ic n="lock" s={15} /><Ic n="sq" s={12} /></span>
          </Combo>
          <Icons list="lmatch lprev lstate" />
        </div>
        <div className={`${bar} w-[580px] bg-[#d6d6d6]`}>
          <Grip />
          <Combo w="w-[149px]" text="ByLayer" pl={5} serif>
            <span className="w-[11px] h-[11px] bg-white border border-[#111] mr-[3px]" />
          </Combo>
          <div className="w-[6px]" />
          <Combo w="w-[160px]" text="ByLayer" pl={4} serif>
            <span className="w-[60px] h-px bg-[#111] mr-[4px]" />
          </Combo>
          <div className="w-[6px]" />
          <Combo w="w-[124px]" text="ByLayer" pl={4} serif>
            <span className="w-[35px] h-px bg-[#111] mr-[4px]" />
          </Combo>
          <div className="w-[6px]" />
          <Combo w="w-[119px]" text="BYCOLOR" pl={8} serif disabled />
        </div>
      </div>
      <div className="flex h-[25px] pl-[3px] gap-[3px] mt-[2px]">
        <div className={`${bar} w-[531px]`}>
          <Grip />
          <Icons list="polysolid box wedge cone sphere cyl torus pyramid helix planar | extrude presspull sweep revolve loft | u1 u2 u3 | g3d g3r gscale gmove" />
        </div>
        <div className={`${bar} w-[486px]`}>
          <Grip />
          <Icons list="u1 u2 u3 | extrude c1 c2 c3 c4 c5 c6 c7 c8 | d1 d2 d3 c8 | e1 e2 e3 e4 e5" />
        </div>
        <div className={`${bar} w-[155px]`}>
          <Grip />
          <Icons list="f1 | w1 w2 w3 w4 | w5" />
        </div>
      </div>
      <div className="flex h-[24px] pl-[3px] mt-[3px]">
        <div className={`${bar} w-[469px]`}>
          <Grip />
          <Icons list="q1 | v1 v2 v3 v4 v5 v6 | vs1 vs2 vs3 vs4 | cam | zoomarrow" />
          <div className="w-[138px] h-[21px] flex items-center justify-end pr-[5px] bg-[#f4f4f4] border border-[#bbb] rounded-[3px] shrink-0"><Arrow dark={false} /></div>
        </div>
      </div>
    </>
  );
}

function VBar({ list }: { list: string }) {
  return (
    <div className="flex flex-col items-center w-[23px] bg-[#ececec] border border-[#3a3a3a]">
      <div className="w-full h-[7px] bg-[#4a4a4a] flex items-center justify-center">
        <div className="w-[16px] h-[3px] bg-[repeating-linear-gradient(90deg,#9a9a9a_0_1px,#2a2a2a_1px_2px)]" />
      </div>
      {list.split(" ").map((n, i) =>
        n === "|" ? (
          <div key={i} className="w-[19px] h-px bg-[#aaa] my-[3px]" />
        ) : n === "A" ? (
          <span key={i} className="h-[22px] flex items-center justify-center text-[21px] leading-none text-[#222]" style={{ fontFamily: '"Liberation Sans",sans-serif' }}>A</span>
        ) : (
          <span key={i} className="h-[22px] flex items-center justify-center"><Ic n={n} s={20} /></span>
        )
      )}
    </div>
  );
}

const BLUR = { filterUnits: "userSpaceOnUse" as const, x: 280, y: 360, width: 640, height: 360 };

function Bowl() {
  return (
    <svg className="absolute left-[300px] top-[263px]" width={530} height={235} viewBox="330 420 530 235">
      <defs>
        <linearGradient id="bo" x1="0" y1="0" x2="0" y2="1">
          <stop offset="0" stopColor="#b8b8b8" />
          <stop offset="0.35" stopColor="#a6a6a6" />
          <stop offset="0.65" stopColor="#8a8a8a" />
          <stop offset="1" stopColor="#585858" />
        </linearGradient>
        <linearGradient id="ft" x1="0" y1="0" x2="1" y2="0">
          <stop offset="0" stopColor="#9a9a9a" />
          <stop offset="0.25" stopColor="#e2e2e2" />
          <stop offset="0.45" stopColor="#c4c4c4" />
          <stop offset="0.75" stopColor="#f4f4f4" />
          <stop offset="1" stopColor="#a0a0a0" />
        </linearGradient>
        <linearGradient id="ri" x1="0" y1="0" x2="1" y2="0">
          <stop offset="0" stopColor="#a8a8a8" />
          <stop offset="0.12" stopColor="#b6b6b6" />
          <stop offset="0.45" stopColor="#d0d0d0" />
          <stop offset="1" stopColor="#c8c8c8" />
        </linearGradient>
        <filter id="bl" {...BLUR}><feGaussianBlur stdDeviation="20" /></filter>
        <filter id="bs" {...BLUR}><feGaussianBlur stdDeviation="8" /></filter>
        <clipPath id="oc"><path d="M336 474C342 520 385 583 450 614C490 631 540 638 595 639C660 638 720 628 765 604C810 578 846 530 854 474Z" /></clipPath>
        <clipPath id="rc"><ellipse cx="594.5" cy="472.5" rx="259.5" ry="49.5" /></clipPath>
      </defs>
      <path d="M503 632C520 645 560 651 595 651C635 651 670 645 687 632Z" fill="url(#ft)" />
      <path d="M336 474C342 520 385 583 450 614C490 631 540 638 595 639C660 638 720 628 765 604C810 578 846 530 854 474Z" fill="url(#bo)" />
      <g clipPath="url(#oc)">
        <ellipse cx="460" cy="625" rx="75" ry="14" fill="#303030" filter="url(#bl)" />
        <ellipse cx="695" cy="528" rx="70" ry="16" fill="#e4e4e4" filter="url(#bl)" />
        <ellipse cx="372" cy="520" rx="22" ry="30" fill="#bcbcbc" filter="url(#bl)" />
      </g>
      <ellipse cx="594.5" cy="472.5" rx="259.5" ry="49.5" fill="url(#ri)" />
      <g clipPath="url(#rc)">
        <ellipse cx="470" cy="430" rx="70" ry="10" fill="#ececec" filter="url(#bs)" />
        <path d="M596 462C625 438 735 436 762 462C780 490 760 535 660 535C610 535 585 505 596 462Z" fill="#fff" filter="url(#bs)" />
        <ellipse cx="710" cy="425" rx="110" ry="12" fill="#f8f8f8" filter="url(#bs)" />
      </g>
    </svg>
  );
}

function ViewCube() {
  return (
    <div className="absolute left-[1040px] top-[46px] w-[150px] h-[140px]">
      <svg className="absolute left-0 top-[40px]" width={150} height={50} viewBox="0 0 150 50">
        <ellipse cx="78" cy="22" rx="61" ry="13" fill="none" stroke="#4a525b" strokeWidth="7" />
      </svg>
      <div className="absolute left-[53px] top-[7px] w-[50px] h-[55px] bg-[#a9abad] rounded-[2px] border-t-[4px] border-t-[#8f9296] border-b border-dashed border-b-[#6e7176] flex items-center justify-center">
        <span className="w-[32px] h-[31px] bg-[#9d9fa4] flex items-center justify-center text-[32px] leading-none font-light text-[#5a5e63]" style={cjk}>上</span>
      </div>
      <span className="absolute left-[14px] top-[54px] text-[9px] leading-none text-[#a4a8ad]" style={cjk}>西</span>
      <span className="absolute left-[132px] top-[54px] text-[9px] leading-none text-[#a4a8ad]" style={cjk}>东</span>
      <span className="absolute left-[73px] top-[74px] text-[10px] leading-none text-[#b0b4b8]" style={cjk}>南</span>
      <div className="absolute left-[49px] top-[120px] w-[58px] h-[16px] rounded-[3px] bg-[#8b9099] flex items-center pl-[4px] gap-[3px] text-[10px] text-[#5e636b]" style={cjk}>
        未命名
        <span className="w-0 h-0 ml-[2px] border-l-[4px] border-r-[4px] border-t-[4px] border-l-transparent border-r-transparent border-t-[#a8adb5]" />
      </div>
    </div>
  );
}

function Ucs() {
  return (
    <svg className="absolute left-[40px] top-[578px]" width={110} height={85} viewBox="0 0 110 85">
      <path d="M9 4l6 6M21 4l-6 6M15 10v7" stroke="#1eb01e" fill="none" />
      <rect x="8" y="17" width="6" height="53" fill="#1c8a1c" />
      <rect x="11" y="17" width="3" height="53" fill="#5cba5c" />
      <rect x="14" y="64" width="47" height="5" fill="#b82424" />
      <rect x="14" y="64" width="47" height="2" fill="#d04848" />
      <path d="M55 50l14 14M69 50L55 64" stroke="#a85050" fill="none" />
      <rect x="8" y="68" width="5" height="9" fill="#1a62c8" />
      <path d="M8 60h12L9 73h12" stroke="#1a62e0" fill="none" />
    </svg>
  );
}

function Main() {
  return (
    <div className="flex h-[713px] mt-[5px]">
      <div className="w-[30px] shrink-0 pl-px flex flex-col items-start">
        <VBar list="l1 l2 l3 l4 l5 l6 l7 l8 l9 l10 l11 l12 l13 l14 l15 l16 l17 l18 A l20" />
      </div>
      <div className="w-[1217px] shrink-0 flex flex-col border-l-2 border-t-2 border-l-[#8a8a8a] border-t-[#8a8a8a] -ml-[2px]">
        <div className="flex-1 flex min-h-0">
          <div className="flex-1 relative bg-[#212932] overflow-hidden">
            <span className="absolute left-[5px] top-[3px] text-[12px] text-[#dfdfdf] whitespace-nowrap" style={ui}>[−][自定义视图][真实]</span>
            <Bowl />
            <ViewCube />
            <Ucs />
          </div>
          <div className="w-[18px] shrink-0 bg-[#f0f0f0] flex flex-col items-center">
            <span className="mt-[6px] w-0 h-0 border-l-[4px] border-r-[4px] border-b-[4px] border-l-transparent border-r-transparent border-b-[#555]" />
            <div className="mt-auto w-[14px] h-[15px] bg-[linear-gradient(#f8f8f8,#c8c8c8)] border border-[#999] rounded-[2px] mb-[5px]" />
            <div className="w-full h-[14px] flex items-center justify-center border-t border-[#ccc]"><Arrow dark={false} /></div>
          </div>
        </div>
        <div className="h-[16px] shrink-0 flex items-center bg-[#f2f2f2] border-b-2 border-white text-[12px] text-[#111]" style={ui}>
          <div className="w-[55px] ml-[3px] flex items-center h-[13px] border border-[#aaa] bg-[#e8e8e8] justify-around text-[#444]">
            <span className="text-[9px] leading-none">|◀</span>
            <span className="text-[9px] leading-none">◀</span>
            <span className="text-[9px] leading-none">▶</span>
            <span className="text-[9px] leading-none">▶|</span>
          </div>
          <span className="ml-[5px] w-[34px] h-[16px] leading-[16px] text-center bg-[#212932] text-white [clip-path:polygon(10%_0,100%_0,88%_100%,0_100%)]">模型</span>
          <span className="ml-[3px] w-[46px] h-[16px] leading-[16px] text-center border-r border-[#555]">布局1</span>
          <span className="w-[46px] h-[16px] leading-[16px] text-center border-r border-[#555]">布局2</span>
          <div className="ml-[599px] w-[410px] h-[14px] flex items-center bg-[#ebebeb] border-l-2 border-[#bbb]">
            <span className="ml-[8px] w-0 h-0 border-t-[3px] border-b-[3px] border-r-[4px] border-t-transparent border-b-transparent border-r-[#333]" />
            <div className="ml-[162px] w-[15px] h-[13px] bg-[linear-gradient(#f6f6f6,#c6c6c6)] border border-[#999]" />
            <span className="ml-auto mr-[6px] w-0 h-0 border-t-[3px] border-b-[3px] border-l-[4px] border-t-transparent border-b-transparent border-l-[#333]" />
          </div>
        </div>
      </div>
      <div className="flex-1 pl-[6px] flex flex-col gap-[3px]">
        <VBar list="r1 r2 r3 r4 r5 r6 r7 r8 r9 r10 r11 r12 r13 r14 r15 r16 r17 r18" />
        <VBar list="o1 o2 o3 o4 | abc o6" />
      </div>
    </div>
  );
}

function DimBar() {
  return (
    <div className="h-[25px] mt-[5px] pl-[30px] flex">
      <div className={`${bar} w-[640px]`}>
        <Grip />
        <Icons list="h1 h2 h3 h4 | h5 h6 h7 h8 | h9 h10 h11 h12 h13 | h14 h15 h16 h17 | h18 h19 h20" />
        <div className="w-px h-[20px] bg-[#9a9a9a] ml-[4px] mr-[3px]" />
        <Combo w="w-[120px]" text="ISO-25" />
        <span className="w-[22px] flex justify-center"><Ic n="dimst" /></span>
      </div>
    </div>
  );
}

function Command() {
  return (
    <div className="flex h-[57px] mt-[7px]">
      <div className="w-[22px] shrink-0 flex flex-col items-center bg-[linear-gradient(#787878,#4e4e4e)]">
        <div className="w-[18px] h-[5px] mt-[3px] bg-[repeating-linear-gradient(90deg,#bbb_0_1px,#5a5a5a_1px_2px)]" />
        <span className="mt-[7px] text-white text-[14px] font-bold leading-none" style={{ fontFamily: '"Liberation Sans",sans-serif' }}>X</span>
        <Wrench size={16} className="mt-[9px] -scale-x-100 text-white" fill="#fff" />
      </div>
      <div className="flex-1 flex flex-col">
        <div className="h-[33px] bg-[#c4c4c4] pl-[4px] pt-[1px] text-[12px] leading-[15px] text-[#111]" style={{ fontFamily: '"Noto Sans CJK SC",monospace' }}>
          <div>命令:</div>
          <div>命令:</div>
        </div>
        <div className="h-[24px] bg-white border-t border-[#777] border-b border-b-[#444] flex items-center pl-[6px] gap-[3px]">
          <span className="w-[14px] h-[15px] border border-[#999] bg-[#e8e8e8] text-[8px] leading-[13px] text-center text-[#222]" style={{ fontFamily: '"Liberation Mono",monospace' }}>&gt;_</span>
          <Tiny c="border-t-[#888]" />
          <span className="ml-[6px] text-[11px] italic text-[#9a9a9a] tracking-[1px]" style={ui}>键入命令</span>
        </div>
      </div>
    </div>
  );
}

const sb = "h-full flex items-center justify-center border-r border-[#4e4e4e] shrink-0";
const statusIcons: [string, boolean][] = [["s1", false], ["s2", false], ["s3", false], ["s4", true], ["s5", false], ["s6", true], ["s7", false], ["s8", true], ["s9", false], ["s10", false], ["s11", false], ["s12", false], ["s13", false], ["s14", false], ["s15", false]];

function StatusBar() {
  return (
    <div className="h-[21px] flex items-center border-t border-[#333] bg-[linear-gradient(#6b6b6b,#8c8c8c_50%,#6e6e6e)]">
      <span className="w-[212px] shrink-0 pl-[12px] text-[11px] text-[#a0a0a0] whitespace-nowrap" style={ui}>4063.0697, -166.1120, 0.0000</span>
      <div className="flex h-full border-l border-[#4e4e4e]">
        {statusIcons.map(([n, on]) => (
          <span key={n} className={`${sb} w-[22px] ${on ? "bg-[linear-gradient(#c8dfe8,#8fc4d4)]" : "bg-[linear-gradient(#c0c0c0,#8e8e8e)]"}`}><Ic n={n} s={17} /></span>
        ))}
      </div>
      <div className="ml-auto flex h-full">
        <span className={`${sb} w-[33px] bg-[linear-gradient(#bdbdbd,#919191)] text-[12px] text-[#111]`} style={ui}>模型</span>
        <span className={`${sb} w-[22px] bg-[linear-gradient(#bdbdbd,#919191)]`}><Ic n="t1" s={15} /></span>
        <span className={`${sb} w-[22px] bg-[linear-gradient(#bdbdbd,#919191)]`}><Ic n="t2" s={16} /></span>
        <span className={`${sb} w-[23px]`} />
        <span className={`${sb} w-[50px] gap-[2px] bg-[linear-gradient(#bdbdbd,#919191)] text-[11px] text-[#111]`} style={ui}><Ic n="t3" s={15} />1:1<Tiny c="border-t-[#111]" /></span>
        <span className={`${sb} w-[23px] bg-[linear-gradient(#bdbdbd,#919191)]`}><Ic n="t4" s={15} /></span>
        <span className={`${sb} w-[23px] bg-[linear-gradient(#bdbdbd,#919191)]`}><Ic n="t5" s={15} /></span>
        <span className={`${sb} w-[6px] bg-[#555]`} />
        <span className={`${sb} w-[23px] bg-[linear-gradient(#bdbdbd,#919191)]`}><Ic n="t6" s={16} /></span>
        <span className={`${sb} w-[23px] bg-[linear-gradient(#bdbdbd,#919191)]`}><Ic n="t7" s={16} /></span>
        <span className={`${sb} w-[23px] bg-[linear-gradient(#bdbdbd,#919191)]`}><Ic n="t8" s={16} /></span>
        <span className={`${sb} w-[26px] bg-[#9e9e9e]`}><Ic n="t9" s={16} /></span>
        <span className={`${sb} w-[12px] bg-[#777]`}><Arrow /></span>
        <span className="h-full w-[24px] flex items-center justify-center bg-[linear-gradient(#bdbdbd,#919191)]"><Ic n="t10" s={16} /></span>
      </div>
    </div>
  );
}

function Watermark() {
  return (
    <div className="absolute left-[982px] top-[846px] w-[235px] h-[110px] pointer-events-none text-white/70 select-none [text-shadow:0_0_2px_#777]" style={{ fontFamily: '"Liberation Sans",sans-serif' }}>
      <span className="absolute left-0 top-[23px] text-[53px] font-bold leading-none tracking-[-1px]">Bai</span>
      <svg className="absolute left-[74px] top-0" width={76} height={80} viewBox="0 0 76 80">
        <g fill="#fff" fillOpacity="0.6">
          <ellipse cx="29" cy="15" rx="8" ry="13" />
          <ellipse cx="50" cy="15" rx="8" ry="13" />
          <ellipse cx="11" cy="30" rx="7.5" ry="11" />
          <ellipse cx="66" cy="32" rx="7.5" ry="11" />
          <path d="M40 32c14 0 18 14 26 22 7 9 2 22-12 21-7 0-10-3-15-3s-9 3-16 3C10 76 4 62 13 52c8-6 13-20 27-20z" />
        </g>
      </svg>
      <span className="absolute left-[91px] top-[43px] text-[26px] font-bold leading-none text-[#6d6d6d] [text-shadow:none]">du</span>
      <span className="absolute left-[148px] top-[33px] text-[37px] font-bold leading-none whitespace-nowrap" style={cjk}>经验</span>
      <span className="absolute left-[3px] top-[79px] text-[25px] leading-none tracking-[0.3px] whitespace-nowrap">jingyan.baidu.com</span>
    </div>
  );
}

function Defs() {
  return (
    <svg className="absolute w-0 h-0">
      <defs>
        <linearGradient id="metal" x1="0" y1="0" x2="1" y2="1">
          <stop offset="0" stopColor="#ffffff" />
          <stop offset="1" stopColor="#a9b0b8" />
        </linearGradient>
        <radialGradient id="ball" cx="0.4" cy="0.35" r="0.7">
          <stop offset="0" stopColor="#ffffff" />
          <stop offset="1" stopColor="#a0a6ae" />
        </radialGradient>
        <radialGradient id="blue" cx="0.4" cy="0.35" r="0.7">
          <stop offset="0" stopColor="#7ac0f5" />
          <stop offset="1" stopColor="#10508f" />
        </radialGradient>
        <radialGradient id="gold" cx="0.55" cy="0.3" r="0.75">
          <stop offset="0" stopColor="#ffe27a" />
          <stop offset="0.55" stopColor="#b47a30" />
          <stop offset="1" stopColor="#3a2f88" />
        </radialGradient>
        <linearGradient id="grad" x1="0" y1="0" x2="0" y2="1">
          <stop offset="0" stopColor="#f2f2f2" />
          <stop offset="1" stopColor="#444" />
        </linearGradient>
        <pattern id="hatch" width="2.5" height="2.5" patternUnits="userSpaceOnUse" patternTransform="rotate(45)">
          <rect width="2.5" height="2.5" fill="#e4e4e4" />
          <rect width="1" height="2.5" fill="#777" />
        </pattern>
        <pattern id="dots" width="3" height="3" patternUnits="userSpaceOnUse">
          <rect width="3" height="3" fill="#9cc4e8" />
          <rect width="1.5" height="1.5" fill="#e4f0fa" />
        </pattern>
      </defs>
    </svg>
  );
}

export default function App() {
  return (
    <div className="relative w-[1280px] h-[983px] overflow-hidden bg-[#646464] flex flex-col">
      <Defs />
      <div className="flex h-[44px] shrink-0">
        <div className="w-[40px] h-[39px] shrink-0 relative z-10 bg-[linear-gradient(#a8a8a8,#6a6a6a)] border border-[#444] rounded-br-[3px] flex items-center pl-[2px]">
          <svg width="30" height="36" viewBox="0 0 30 36">
            <defs>
              <linearGradient id="lg" x1="0" y1="0" x2="0" y2="1">
                <stop offset="0" stopColor="#ef3a3a" />
                <stop offset="1" stopColor="#8d0f12" />
              </linearGradient>
            </defs>
            <path d="M1 34L16 3h8l4 25-9 1-1-6-6 1-3 8zM14 18h4l-1-7z" fill="url(#lg)" fillRule="evenodd" stroke="#5a0a0a" strokeWidth="0.5" />
          </svg>
          <span className="ml-[1px] mt-[1px]"><Tiny c="border-t-[#111]" /></span>
        </div>
        <div className="flex-1 min-w-0 flex flex-col">
          <TitleBar />
          <MenuBar />
        </div>
      </div>
      <Toolbars />
      <Main />
      <DimBar />
      <Command />
      <StatusBar />
      <Watermark />
    </div>
  );
}
